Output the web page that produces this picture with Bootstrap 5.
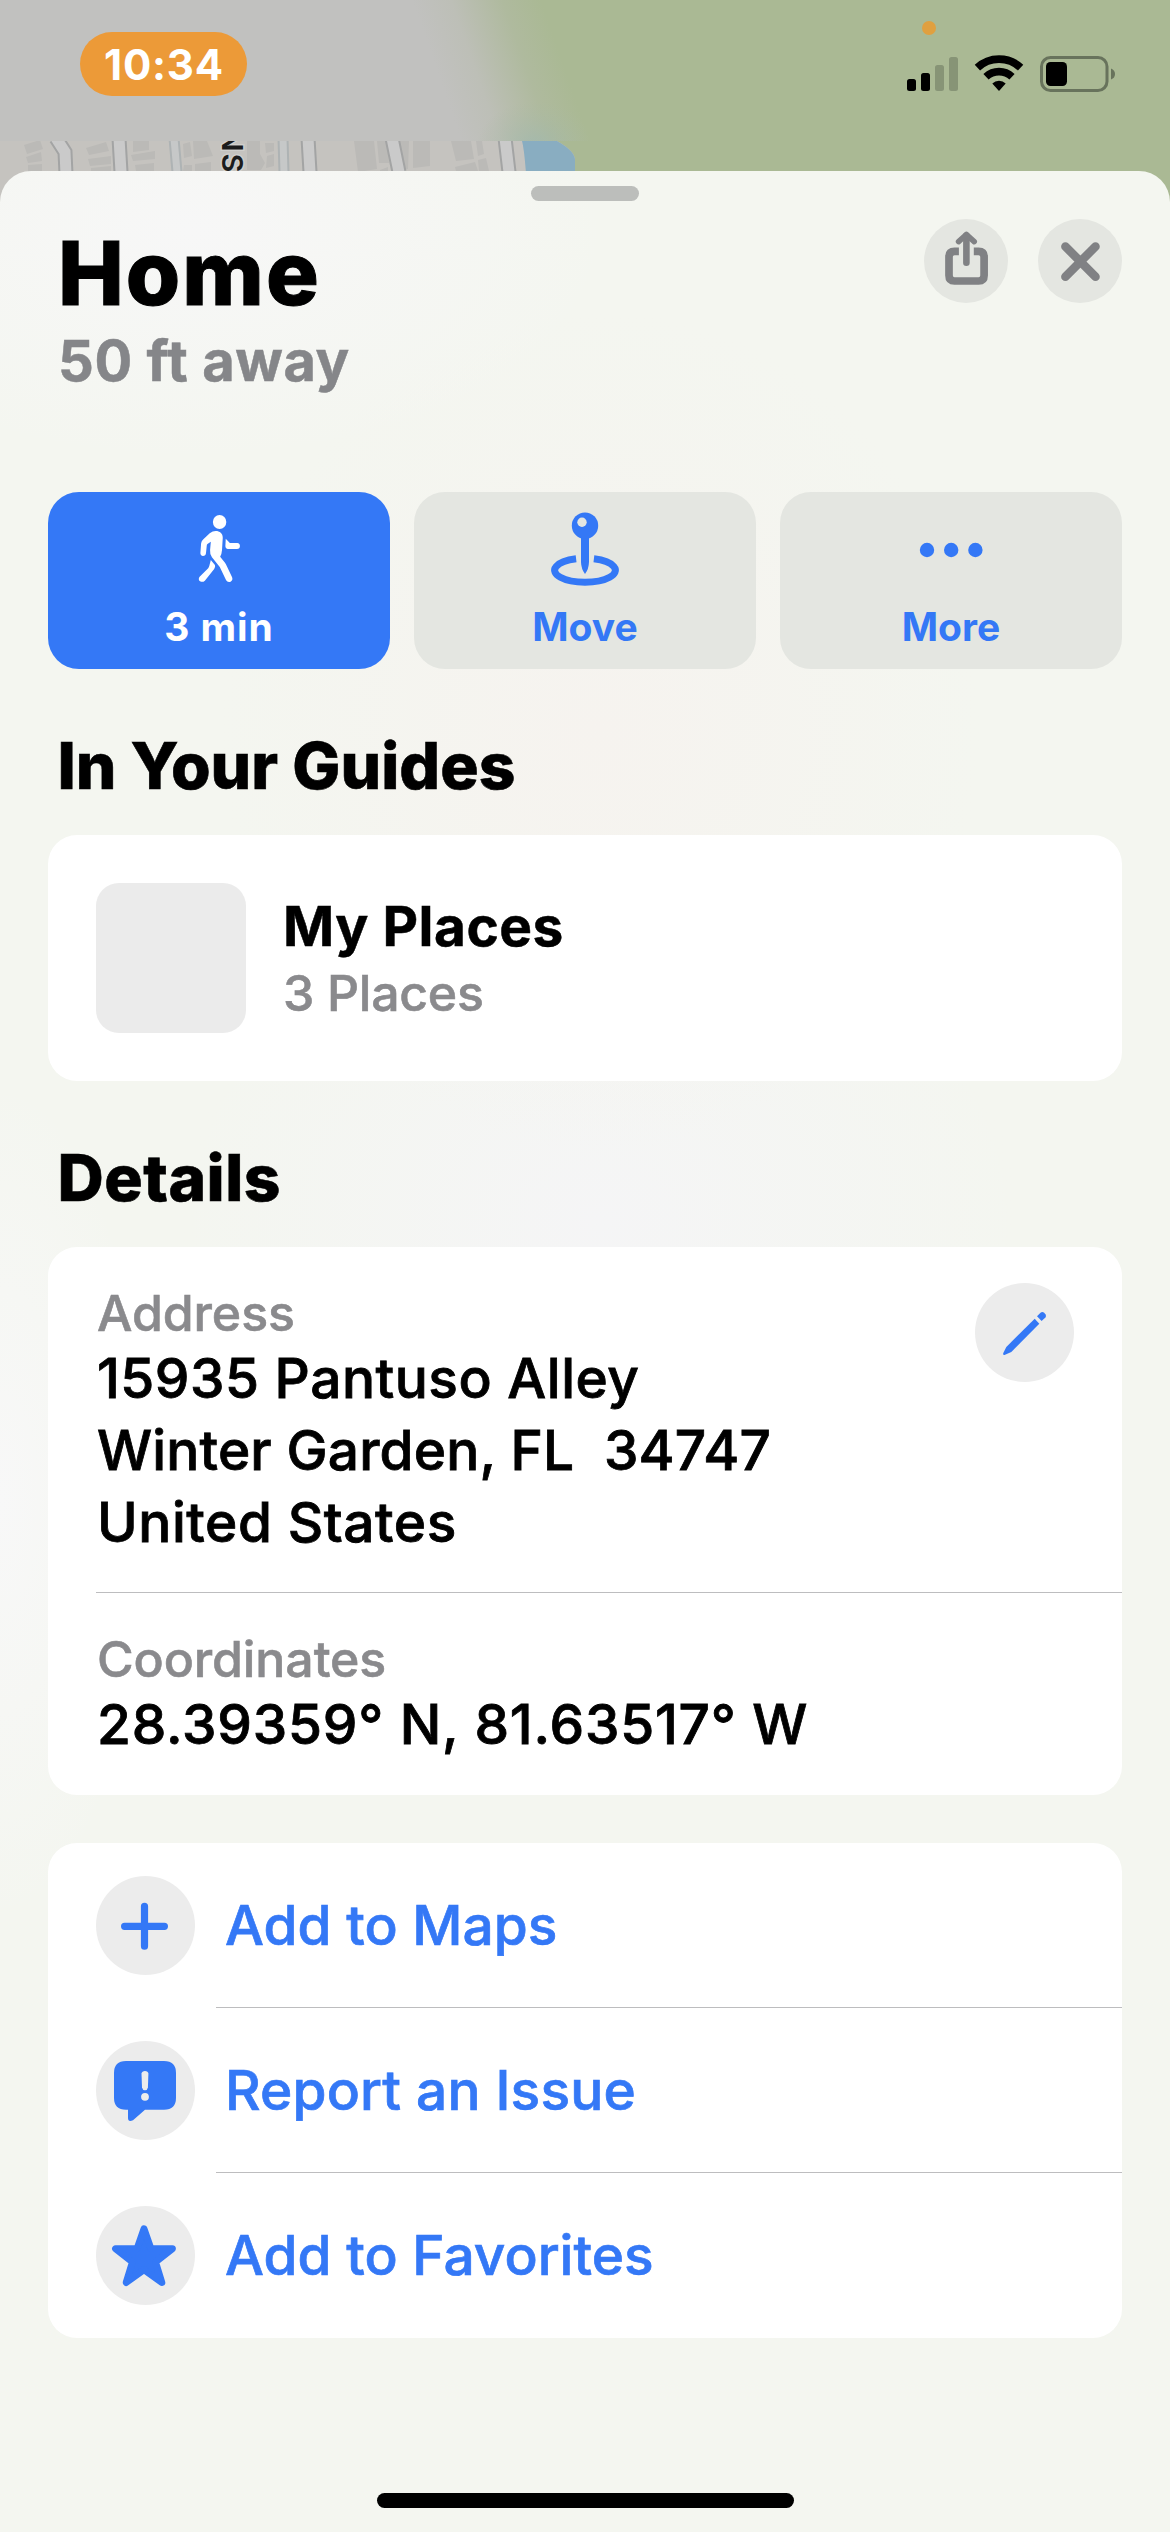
<!DOCTYPE html>
<html lang="en">
<head>
<meta charset="utf-8">
<meta name="viewport" content="width=device-width, initial-scale=1">
<title>Home</title>
<link href="https://cdn.jsdelivr.net/npm/bootstrap@5.3.0/dist/css/bootstrap.min.css" rel="stylesheet">
<style>
:root { --tint: #3478f6; }
body { font-family: Inter, "Liberation Sans", sans-serif; color: #000; background: #f4f6f0; }
.screen { width: 1170px; height: 2532px; }
.map-bg { left: 0; top: 0; z-index: 0; }
.status { height: 171px; z-index: 1; }
.time-pill { width: 167px; height: 64px; margin: 32px 0 0 80px; border-radius: 32px; background: #ec9a38; font-size: 42px; font-weight: 650; letter-spacing: .8px; padding-left: 1px; }
.status-icons { margin-right: 50px; }
.sheet { z-index: 1; height: 2361px; padding: 0 48px; border-radius: 31px 31px 0 0;
  background:
    radial-gradient(ellipse 420px 230px at 190px 60px, #f7f7f7, rgba(247,247,247,0)),
    radial-gradient(ellipse 380px 420px at 600px 560px, #f6f3ef, rgba(246,243,239,0)),
    radial-gradient(ellipse 420px 330px at 600px 1050px, #f5f5f6, rgba(245,245,246,0)),
    radial-gradient(ellipse 150px 420px at 0 1330px, #f8f8f8, rgba(248,248,248,0)),
    #f4f6f0; }
.grabber { width: 108px; height: 15px; margin-top: 15px; border-radius: 8px; background: #bcbebb; }
.sheet-head { margin-top: 18px; height: 175px; padding-left: 10px; }
.head-buttons { gap: 30px; }
.place-title { font-size: 88px; font-weight: 850; line-height: 100px; letter-spacing: 2px; margin: 4px 0 5px; -webkit-text-stroke: 1px #000; }
.place-dist { font-size: 56px; font-weight: 750; line-height: 66px; letter-spacing: .6px; color: #858689; -webkit-text-stroke: .5px #858689; }
.round-btn { width: 84px; height: 84px; background: #e4e6e1; }
.actions { margin-top: 98px; gap: 24px; }
.action { height: 177px; border-radius: 31px; background: #e4e6e1; color: var(--tint); font-size: 39px; font-weight: 750; line-height: 46px; letter-spacing: 0; }
.action.primary { background: var(--tint); color: #fff; letter-spacing: .9px; }
.section-title { font-size: 64px; font-weight: 770; line-height: 80px; letter-spacing: .05px; margin: 57px 0 29px; padding-left: 9.5px; -webkit-text-stroke: .6px #000; }
.section-title.wide { letter-spacing: .5px; }
.panel { background: #fff; border-radius: 29px; }
.guide { height: 246px; padding: 0 48px; gap: 37px; }
.thumb { width: 150px; height: 150px; border-radius: 23px; background: #ebebeb; }
.guide-name { font-size: 55px; font-weight: 750; line-height: 64px; letter-spacing: .5px; margin-bottom: 5px; -webkit-text-stroke: .5px #000; }
.muted { color: #8a8a8d; font-size: 50px; font-weight: 450; line-height: 57px; letter-spacing: -.1px; -webkit-text-stroke: .6px #8a8a8d; }
.guide .muted { line-height: 60px; letter-spacing: -.3px; }
.detail { margin-left: 48px; padding: 38px 48px 34px 1px; }
.detail + .detail { border-top: 1px solid #bdbdbf; padding-bottom: 35px; }
.detail-text { font-size: 55px; font-weight: 500; line-height: 72px; white-space: pre; -webkit-text-stroke: .8px #000; }
.l1 { letter-spacing: .5px; } .l2 { letter-spacing: .15px; } .l3 { letter-spacing: .55px; } .l4 { letter-spacing: .8px; }
.icon-dot { width: 99px; height: 99px; background: #ececec; flex: none; }
.edit-dot { margin-top: -2px; }
.link-panel { margin-top: 48px; padding-left: 48px; }
.link-row { height: 165px; color: var(--tint); }
.link-label { height: 165px; margin-left: 21px; padding-left: 9px; font-size: 55px; font-weight: 500; border-bottom: 1px solid #bdbdbf; -webkit-text-stroke: .7px var(--tint); }
.link-label.l0 { letter-spacing: .15px; }
.link-row:last-child .link-label { border-bottom: 0; }
.home-bar { width: 417px; height: 15px; border-radius: 8px; background: #000; margin-top: 155px; }
svg { display: block; }
</style>
</head>
<body>
<main class="screen position-relative overflow-hidden">
  <svg class="map-bg position-absolute" width="1170" height="230" viewBox="0 0 1170 230" aria-hidden="true">
    <defs>
      <linearGradient id="land" gradientUnits="userSpaceOnUse" x1="433" y1="60" x2="548" y2="20">
        <stop offset="0" stop-color="#c1c1bf"/><stop offset=".3" stop-color="#bdbfb7"/><stop offset=".7" stop-color="#afba9e"/><stop offset="1" stop-color="#aab994"/>
      </linearGradient>
      <radialGradient id="pond"><stop offset="0" stop-color="#9fb8ae" stop-opacity=".75"/><stop offset="1" stop-color="#a8b99f" stop-opacity="0"/></radialGradient>
      <clipPath id="strip"><path d="M0 141H557Q575 151 575 160V230H0Z"/></clipPath>
    </defs>
    <rect width="1170" height="230" fill="#aab994"/>
    <rect width="1170" height="141" fill="url(#land)"/>
    <svg width="1170" height="141"><ellipse cx="535" cy="145" rx="58" ry="44" fill="url(#pond)"/></svg>
    <g clip-path="url(#strip)">
      <rect y="141" width="580" height="90" fill="#c5c3bf"/>
      <g fill="#bbbab7">
        <path d="M24 145l16-5 3 9-16 5zM26 157l15-5 1 9-14 2zM28 165l14-1v8H28zM86 148l20-6 3 9-20 4zM88 159l23-3v8l-21 2zM91 168l20-2v6H91zM133 141h16v9l-16 2zM131 155l24-4v8l-22 2zM135 165l19-2v8h-18zM183 144l7-2 2 14-8 2zM193 141h14l6 15-19 3zM184 165h8v6h-9zM195 164l16-2v10h-16zM247 141h13v13l5 9-4 7h-14zM265 143h9v8l-8 2zM267 156l7-2v12l-8 2zM354 141h20l3 28-19 3zM377 141h10l2 22h-10zM398 141l11 0-1 28-11 2zM413 141h17v25l-17 2zM451 141h20l3 18-18 2zM476 141h6l2 13-6 2zM455 167l20-5 3 9h-22zM478 160l8-2 3 13h-10zM380 170l8-3v5h-8z"/>
      </g>
      <g stroke="#a3a4a4" fill="none" stroke-width="14">
        <path d="M56 138l9 14 1 22M119 138l2 34M308 138l2 34M392 138l7 34M505 138l4 34" stroke-width="15"/>
        <path d="M174 138l3 34M283 138l1 34" stroke="#aeb3b4" stroke-width="11"/>
      </g>
      <g stroke="#cacaca" fill="none" stroke-width="11">
        <path d="M56 138l9 14 1 22M119 138l2 34M308 138l2 34M392 138l7 34M505 138l4 34"/>
        <path d="M174 138l3 34M283 138l1 34" stroke="#c6c8c8" stroke-width="7"/>
      </g>
      <path d="M522 141H580V230H529Q526 155 522 141Z" fill="#89adc1"/>
      <text transform="translate(221.500 129.500) rotate(90)" font-family="Inter, sans-serif" font-size="29" font-weight="600" letter-spacing="2" fill="#1c1c1c" stroke="#d0cfcc" stroke-width="3" paint-order="stroke">NS</text>
    </g>
  </svg>

  <header class="status position-relative d-flex justify-content-between align-items-start">
    <div class="time-pill d-flex align-items-center justify-content-center text-white">10:34</div>
    <svg class="status-icons" width="220" height="100" viewBox="900 0 220 100" aria-label="Signal, Wi-Fi, battery">
      <circle cx="929" cy="28" r="7" fill="#e0a040"/>
      <rect x="907" y="79" width="9" height="12" rx="2.500"/><rect x="921" y="73" width="9" height="18" rx="2.500"/>
      <g fill="#879476"><rect x="935" y="65" width="9" height="26" rx="2.500"/><rect x="949" y="57" width="9" height="34" rx="2.500"/></g>
      <g fill="none" stroke="#000"><path d="M977.400 67.600A31.600 31.600 0 0 1 1020.600 67.600" stroke-width="7.800"/><path d="M986 76.800A19 19 0 0 1 1012 76.800" stroke-width="7.600"/></g>
      <path d="M992.300 83.500A9.800 9.800 0 0 1 1005.700 83.500L999 91Z"/>
      <rect x="1041.500" y="57.500" width="65.500" height="33" rx="9" fill="none" stroke="#68735c" stroke-width="3"/>
      <rect x="1046" y="62" width="21" height="24" rx="4.500"/>
      <path d="M1111 68.500Q1115 70 1115 74T1111 79.500Z" fill="#68735c"/>
    </svg>
  </header>

  <section class="sheet position-relative d-flex flex-column">
    <div class="grabber mx-auto flex-shrink-0"></div>
    <div class="sheet-head d-flex justify-content-between align-items-start flex-shrink-0">
      <div>
        <h1 class="place-title">Home</h1>
        <div class="place-dist">50 ft away</div>
      </div>
      <div class="head-buttons d-flex">
        <button class="round-btn btn p-0 border-0 rounded-circle" aria-label="Share">
          <svg width="84" height="84" viewBox="0 0 84 84" fill="none" stroke="#808184">
            <path d="M34.900 32.300H30.500Q25 32.300 25 37.800V56.600Q25 62 30.500 62H54.600Q60.100 62 60.100 56.600V37.800Q60.100 32.300 54.600 32.300H49.800" stroke-width="7.700"/>
            <path d="M42.400 16.500V43.700" stroke-width="6.600" stroke-linecap="round"/><path d="M34.600 22.600L42.400 15.500 50.200 22.600" stroke-width="5.600" stroke-linecap="round" stroke-linejoin="round"/>
          </svg>
        </button>
        <button class="round-btn btn p-0 border-0 rounded-circle" aria-label="Close">
          <svg width="84" height="84" viewBox="0 0 84 84"><path d="M27.400 27.500L57.500 57.700M57.500 27.500L27.400 57.700" stroke="#808184" stroke-width="8.600" stroke-linecap="round"/></svg>
        </button>
      </div>
    </div>

    <div class="actions d-flex flex-shrink-0">
      <button class="action primary btn p-0 border-0 flex-fill w-100 d-flex flex-column align-items-center justify-content-start">
        <svg width="80" height="112" viewBox="0 0 80 112" fill="#fff"><g transform="scale(.3731 .3333) translate(-479.700 -66)">
          <ellipse cx="588.500" cy="156" rx="18" ry="21"/>
          <path d="M578 183C589 183 597 190 597 203L595 240Q594 254 590 260L603 278Q606 283 608 289L622 322Q625 331 618 335Q610 338 606 331L589 291L568 262Q562 252 563 240L565 215L556 222Q554 224 554 228L552 250Q551 258 544 258Q537 257 537 249L539 220Q540 213 545 208L562 190Q570 183 578 183Z"/>
          <path d="M605 206L616 219H636Q643 220 643 228Q643 237 635 237H611Q604 236 604 228Z"/>
          <path d="M565 270L576 285Q578 290 574 297L549 332Q543 338 536 334Q530 328 535 320L558 295Q560 291 561 287Z"/>
        </g></svg>
        3 min
      </button>
      <button class="action btn p-0 border-0 flex-fill w-100 d-flex flex-column align-items-center justify-content-start">
        <svg width="80" height="112" viewBox="0 0 80 112" fill="#3478f6">
          <path d="M31.100 66.800A30.400 12 0 1 0 48.900 66.800" fill="none" stroke="#3478f6" stroke-width="7"/>
          <path d="M36 44H44V70Q43.800 77 40 82Q36.200 77 36 70Z"/><circle cx="40" cy="33.700" r="13.200"/>
          <circle cx="37" cy="30.300" r="4.700" fill="#e4e6e1"/>
        </svg>
        Move
      </button>
      <button class="action btn p-0 border-0 flex-fill w-100 d-flex flex-column align-items-center justify-content-start">
        <svg width="80" height="112" viewBox="0 0 80 112" fill="#3478f6"><circle cx="16" cy="58" r="7.200"/><circle cx="40.200" cy="58" r="7.200"/><circle cx="64.400" cy="58" r="7.200"/></svg>
        More
      </button>
    </div>

    <h2 class="section-title">In Your Guides</h2>
    <div class="panel guide d-flex align-items-center flex-shrink-0">
      <div class="thumb"></div>
      <div>
        <div class="guide-name">My Places</div>
        <div class="muted">3 Places</div>
      </div>
    </div>

    <h2 class="section-title wide">Details</h2>
    <div class="panel flex-shrink-0">
      <div class="detail d-flex justify-content-between align-items-start">
        <div>
          <div class="muted">Address</div>
          <div class="detail-text"><div class="l1">15935 Pantuso Alley</div><div class="l2">Winter Garden, FL  34747</div><div class="l3">United States</div></div>
        </div>
        <button class="icon-dot edit-dot btn p-0 border-0 rounded-circle" aria-label="Edit">
          <svg width="99" height="99" viewBox="0 0 99 99" fill="#3478f6"><path d="M59.700 35.700L64.300 40.700 36.300 69 29.500 72Q27.700 72.300 28.300 70L31.300 64Z"/><path d="M62 33.300L65.500 29.800Q67.300 28.400 69.200 29.800L70.400 31.200Q71.700 33 70.400 34.500L66.600 38Z"/></svg>
        </button>
      </div>
      <div class="detail">
        <div class="muted">Coordinates</div>
        <div class="detail-text l4">28.39359° N, 81.63517° W</div>
      </div>
    </div>

    <div class="panel link-panel flex-shrink-0">
      <div class="link-row d-flex align-items-center">
        <span class="icon-dot rounded-circle"><svg width="99" height="99" viewBox="0 0 99 99"><path d="M48.500 30.300V70.200M28.600 50.300H68.400" stroke="#3478f6" stroke-width="7.200" stroke-linecap="round"/></svg></span>
        <span class="link-label flex-fill d-flex align-items-center">Add to Maps</span>
      </div>
      <div class="link-row d-flex align-items-center">
        <span class="icon-dot rounded-circle"><svg width="99" height="99" viewBox="0 0 99 99"><path d="M30 20H68Q80 20 80 32V56.700Q80 68.700 68 68.700H49L37 79.300Q32 81.500 32 77V68.700H30Q18 68.700 18 56.700V32Q18 20 30 20Z" fill="#3478f6"/><path d="M45.500 32.500Q46 30 49 30T52.400 32.500L51.900 46.500Q51.500 49.200 49 49.200T46 46.500Z" fill="#ececec"/><circle cx="49" cy="55.800" r="3.900" fill="#ececec"/></svg></span>
        <span class="link-label l0 flex-fill d-flex align-items-center">Report an Issue</span>
      </div>
      <div class="link-row d-flex align-items-center">
        <span class="icon-dot rounded-circle"><svg width="99" height="99" viewBox="0 0 99 99"><path d="M48 22.800L54.900 42.700H76.400L59.500 55.900 65.800 76.500 48 63.700 30.200 76.500 36.500 55.900 19.600 42.700H41.100Z" fill="#3478f6" stroke="#3478f6" stroke-width="7" stroke-linejoin="round"/></svg></span>
        <span class="link-label flex-fill d-flex align-items-center">Add to Favorites</span>
      </div>
    </div>
    <div class="home-bar mx-auto flex-shrink-0"></div>
  </section>
</main>
<script src="https://cdn.jsdelivr.net/npm/bootstrap@5.3.0/dist/js/bootstrap.bundle.min.js"></script>
</body>
</html>
